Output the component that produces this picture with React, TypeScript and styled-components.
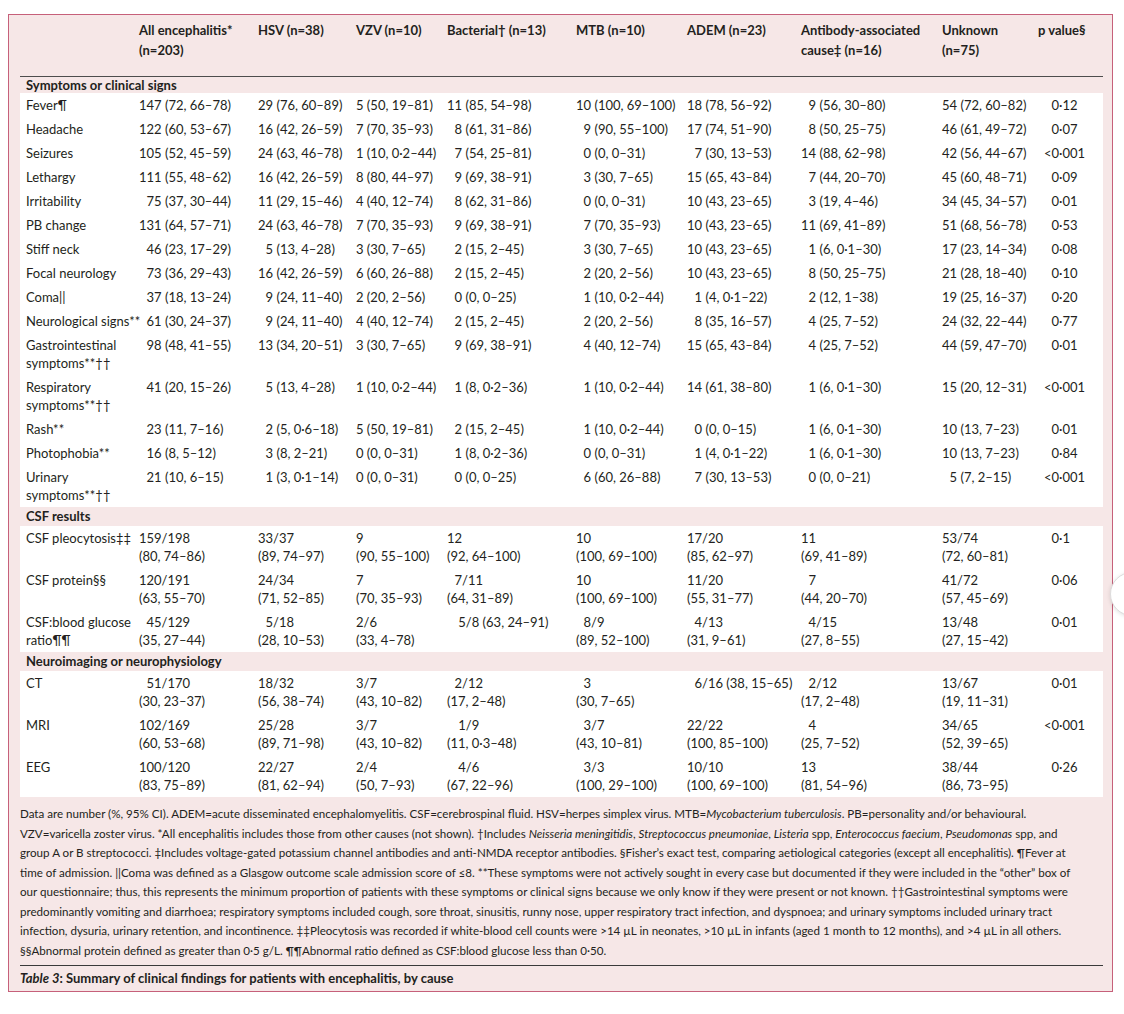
import React from "react"
import styled, { createGlobalStyle } from "styled-components"

const GlobalStyle = createGlobalStyle`
  html, body {
    margin: 0;
    padding: 0;
    background: #fff;
  }
  body {
    font-family: Lato, "Noto Sans", "Liberation Sans", sans-serif;
    color: #231f20;
  }
`

// column template shared by head and every body section
const COLS = "119px 119px 98px 91px 129px 111px 114px 141px 80px 81px"

// widest lead (digits before " (") per data column, symptoms section
const LEADS = [3, 2, 1, 2, 2, 2, 2, 2]

const Page = styled.div`
  width: 1105px;
  padding: 14px 11px 20px 8px;
`

const Panel = styled.section`
  background: #f6e7e7;
  border: 1.5px solid #c6607a;
  padding: 0 9px 0 11px;
`

const Grid = styled.div`
  display: grid;
  grid-template-columns: ${COLS};
`

const Head = styled(Grid)`
  padding: 6px 0 16px;
  border-bottom: 1.5px solid #4d4d4d;
  font-size: 13px;
  font-weight: 700;
  line-height: 19.5px;
`

const HeadCell = styled.div<{ $pad?: number }>`
  white-space: nowrap;
  padding-left: ${(p) => p.$pad ?? 0}px;
`

const SectionTitle = styled.div<{ $tight?: boolean }>`
  padding: ${(p) => (p.$tight ? "0 6px" : "0 6px 1px")};
  font-size: 13px;
  font-weight: 700;
  line-height: ${(p) => (p.$tight ? "16px" : "18px")};
`

const Body = styled(Grid)`
  background: #fff;
  font-size: 13px;
  line-height: 18px;
`

const Cell = styled.div<{ $pad?: number }>`
  white-space: nowrap;
  padding: 3px 0 3px ${(p) => p.$pad ?? 0}px;
`

const Lead = styled.span<{ $w: number }>`
  display: inline-block;
  min-width: ${(p) => p.$w}ch;
  text-align: right;
`

const Indent = styled.span<{ $w: number }>`
  display: inline-block;
  width: ${(p) => p.$w}ch;
`

const Line = styled.span`
  display: block;
`

const Notes = styled.div`
  padding: 7px 0 2px;
  font-size: 11.6px;
  line-height: 19.5px;
`

const NoteLine = styled.div`
  white-space: nowrap;
`

const Caption = styled.div`
  margin-top: 3px;
  padding: 3px 0 4px;
  border-top: 1px solid #3a3a3a;
  font-size: 13px;
  font-weight: 700;
  line-height: 18px;
`

const SideButton = styled.div`
  position: fixed;
  top: 572px;
  right: -30px;
  width: 42px;
  height: 42px;
  border-radius: 50%;
  background: #fff;
  border: 1px solid #dcdcdc;
  box-shadow: 0 1px 4px rgba(0, 0, 0, 0.12);
`

type Row = { label: string; cells: string[] }

const symptoms: Row[] = [
  { label: "Fever¶", cells: ["147 (72, 66–78)", "29 (76, 60–89)", "5 (50, 19–81)", "11 (85, 54–98)", "10 (100, 69–100)", "18 (78, 56–92)", "9 (56, 30–80)", "54 (72, 60–82)", "0·12"] },
  { label: "Headache", cells: ["122 (60, 53–67)", "16 (42, 26–59)", "7 (70, 35–93)", "8 (61, 31–86)", "9 (90, 55–100)", "17 (74, 51–90)", "8 (50, 25–75)", "46 (61, 49–72)", "0·07"] },
  { label: "Seizures", cells: ["105 (52, 45–59)", "24 (63, 46–78)", "1 (10, 0·2–44)", "7 (54, 25–81)", "0 (0, 0–31)", "7 (30, 13–53)", "14 (88, 62–98)", "42 (56, 44–67)", "<0·001"] },
  { label: "Lethargy", cells: ["111 (55, 48–62)", "16 (42, 26–59)", "8 (80, 44–97)", "9 (69, 38–91)", "3 (30, 7–65)", "15 (65, 43–84)", "7 (44, 20–70)", "45 (60, 48–71)", "0·09"] },
  { label: "Irritability", cells: ["75 (37, 30–44)", "11 (29, 15–46)", "4 (40, 12–74)", "8 (62, 31–86)", "0 (0, 0–31)", "10 (43, 23–65)", "3 (19, 4–46)", "34 (45, 34–57)", "0·01"] },
  { label: "PB change", cells: ["131 (64, 57–71)", "24 (63, 46–78)", "7 (70, 35–93)", "9 (69, 38–91)", "7 (70, 35–93)", "10 (43, 23–65)", "11 (69, 41–89)", "51 (68, 56–78)", "0·53"] },
  { label: "Stiff neck", cells: ["46 (23, 17–29)", "5 (13, 4–28)", "3 (30, 7–65)", "2 (15, 2–45)", "3 (30, 7–65)", "10 (43, 23–65)", "1 (6, 0·1–30)", "17 (23, 14–34)", "0·08"] },
  { label: "Focal neurology", cells: ["73 (36, 29–43)", "16 (42, 26–59)", "6 (60, 26–88)", "2 (15, 2–45)", "2 (20, 2–56)", "10 (43, 23–65)", "8 (50, 25–75)", "21 (28, 18–40)", "0·10"] },
  { label: "Coma||", cells: ["37 (18, 13–24)", "9 (24, 11–40)", "2 (20, 2–56)", "0 (0, 0–25)", "1 (10, 0·2–44)", "1 (4, 0·1–22)", "2 (12, 1–38)", "19 (25, 16–37)", "0·20"] },
  { label: "Neurological signs**", cells: ["61 (30, 24–37)", "9 (24, 11–40)", "4 (40, 12–74)", "2 (15, 2–45)", "2 (20, 2–56)", "8 (35, 16–57)", "4 (25, 7–52)", "24 (32, 22–44)", "0·77"] },
  { label: "Gastrointestinal\nsymptoms**††", cells: ["98 (48, 41–55)", "13 (34, 20–51)", "3 (30, 7–65)", "9 (69, 38–91)", "4 (40, 12–74)", "15 (65, 43–84)", "4 (25, 7–52)", "44 (59, 47–70)", "0·01"] },
  { label: "Respiratory\nsymptoms**††", cells: ["41 (20, 15–26)", "5 (13, 4–28)", "1 (10, 0·2–44)", "1 (8, 0·2–36)", "1 (10, 0·2–44)", "14 (61, 38–80)", "1 (6, 0·1–30)", "15 (20, 12–31)", "<0·001"] },
  { label: "Rash**", cells: ["23 (11, 7–16)", "2 (5, 0·6–18)", "5 (50, 19–81)", "2 (15, 2–45)", "1 (10, 0·2–44)", "0 (0, 0–15)", "1 (6, 0·1–30)", "10 (13, 7–23)", "0·01"] },
  { label: "Photophobia**", cells: ["16 (8, 5–12)", "3 (8, 2–21)", "0 (0, 0–31)", "1 (8, 0·2–36)", "0 (0, 0–31)", "1 (4, 0·1–22)", "1 (6, 0·1–30)", "10 (13, 7–23)", "0·84"] },
  { label: "Urinary\nsymptoms**††", cells: ["21 (10, 6–15)", "1 (3, 0·1–14)", "0 (0, 0–31)", "0 (0, 0–25)", "6 (60, 26–88)", "7 (30, 13–53)", "0 (0, 0–21)", "5 (7, 2–15)", "<0·001"] },
]

// "~" = one digit of indent, "^" = half a digit, "\n" = line break
const csf: Row[] = [
  { label: "CSF pleocytosis‡‡", cells: ["159/198\n(80, 74–86)", "33/37\n(89, 74–97)", "9\n(90, 55–100)", "12\n(92, 64–100)", "10\n(100, 69–100)", "17/20\n(85, 62–97)", "11\n(69, 41–89)", "53/74\n(72, 60–81)", "0·1"] },
  { label: "CSF protein§§", cells: ["120/191\n(63, 55–70)", "24/34\n(71, 52–85)", "7\n(70, 35–93)", "~7/11\n(64, 31–89)", "10\n(100, 69–100)", "11/20\n(55, 31–77)", "~7\n(44, 20–70)", "41/72\n(57, 45–69)", "0·06"] },
  { label: "CSF:blood glucose\nratio¶¶", cells: ["~45/129\n(35, 27–44)", "~5/18\n(28, 10–53)", "2/6\n(33, 4–78)", "~^5/8 (63, 24–91)", "~8/9\n(89, 52–100)", "~4/13\n(31, 9–61)", "~4/15\n(27, 8–55)", "13/48\n(27, 15–42)", "0·01"] },
]

const neuro: Row[] = [
  { label: "CT", cells: ["~51/170\n(30, 23–37)", "18/32\n(56, 38–74)", "3/7\n(43, 10–82)", "~2/12\n(17, 2–48)", "~3\n(30, 7–65)", "~6/16 (38, 15–65)", "~2/12\n(17, 2–48)", "13/67\n(19, 11–31)", "0·01"] },
  { label: "MRI", cells: ["102/169\n(60, 53–68)", "25/28\n(89, 71–98)", "3/7\n(43, 10–82)", "~^1/9\n(11, 0·3–48)", "~3/7\n(43, 10–81)", "22/22\n(100, 85–100)", "~4\n(25, 7–52)", "34/65\n(52, 39–65)", "<0·001"] },
  { label: "EEG", cells: ["100/120\n(83, 75–89)", "22/27\n(81, 62–94)", "2/4\n(50, 7–93)", "~^4/6\n(67, 22–96)", "~3/3\n(100, 29–100)", "10/10\n(100, 69–100)", "13\n(81, 54–96)", "38/44\n(86, 73–95)", "0·26"] },
]

const Multi = ({ text }: { text: string }) => (
  <>
    {text.split("\n").map((t, i) => (
      <Line key={i}>{t}</Line>
    ))}
  </>
)

const PValue = ({ v }: { v: string }) => {
  const [head, tail] = v.split("·")
  return (
    <Cell $pad={22}>
      <Lead $w={2}>{head}</Lead>·{tail}
    </Cell>
  )
}

const Aligned = ({ v, lead }: { v: string; lead: number }) => {
  const i = v.indexOf(" ")
  return (
    <Cell>
      <Lead $w={lead}>{v.slice(0, i)}</Lead>
      {v.slice(i)}
    </Cell>
  )
}

const Stacked = ({ v }: { v: string }) => {
  let indent = 0
  let s = v
  while (s[0] === "~" || s[0] === "^") {
    indent += s[0] === "~" ? 1 : 0.5
    s = s.slice(1)
  }
  const [first, ...rest] = s.split("\n")
  return (
    <Cell>
      <Line>
        {indent > 0 && <Indent $w={indent} />}
        {first}
      </Line>
      {rest.map((r, i) => (
        <Line key={i}>{r}</Line>
      ))}
    </Cell>
  )
}

const Section = ({ rows, stacked }: { rows: Row[]; stacked?: boolean }) => (
  <Body>
    {rows.map((row) => (
      <React.Fragment key={row.label}>
        <Cell $pad={6}>
          <Multi text={row.label} />
        </Cell>
        {row.cells.map((c, i) =>
          i === 8 ? (
            <PValue key={i} v={c} />
          ) : stacked ? (
            <Stacked key={i} v={c} />
          ) : (
            <Aligned key={i} v={c} lead={LEADS[i]} />
          )
        )}
      </React.Fragment>
    ))}
  </Body>
)

const headers = [
  "",
  "All encephalitis*\n(n=203)",
  "HSV (n=38)",
  "VZV (n=10)",
  "Bacterial† (n=13)",
  "MTB (n=10)",
  "ADEM (n=23)",
  "Antibody-associated\ncause‡ (n=16)",
  "Unknown\n(n=75)",
  "p value§",
]

export default function App() {
  return (
    <Page>
      <GlobalStyle />
      <Panel>
        <Head>
          {headers.map((h, i) => (
            <HeadCell key={i} $pad={i === 0 ? 6 : i === 9 ? 16 : 0}>
              <Multi text={h} />
            </HeadCell>
          ))}
        </Head>

        <SectionTitle $tight>Symptoms or clinical signs</SectionTitle>
        <Section rows={symptoms} />

        <SectionTitle>CSF results</SectionTitle>
        <Section rows={csf} stacked />

        <SectionTitle>Neuroimaging or neurophysiology</SectionTitle>
        <Section rows={neuro} stacked />

        <Notes>
          <NoteLine>
            Data are number (%, 95% CI). ADEM=acute disseminated encephalomyelitis. CSF=cerebrospinal fluid. HSV=herpes simplex virus. MTB=<i>Mycobacterium tuberculosis</i>. PB=personality and/or behavioural.
          </NoteLine>
          <NoteLine>
            VZV=varicella zoster virus. *All encephalitis includes those from other causes (not shown). †Includes <i>Neisseria meningitidis</i>, <i>Streptococcus pneumoniae</i>, <i>Listeria</i> spp, <i>Enterococcus faecium</i>, <i>Pseudomonas</i> spp, and
          </NoteLine>
          <NoteLine>
            group A or B streptococci. ‡Includes voltage-gated potassium channel antibodies and anti-NMDA receptor antibodies. §Fisher’s exact test, comparing aetiological categories (except all encephalitis). ¶Fever at
          </NoteLine>
          <NoteLine>
            time of admission. ||Coma was defined as a Glasgow outcome scale admission score of ≤8. **These symptoms were not actively sought in every case but documented if they were included in the “other” box of
          </NoteLine>
          <NoteLine>
            our questionnaire; thus, this represents the minimum proportion of patients with these symptoms or clinical signs because we only know if they were present or not known. ††Gastrointestinal symptoms were
          </NoteLine>
          <NoteLine>
            predominantly vomiting and diarrhoea; respiratory symptoms included cough, sore throat, sinusitis, runny nose, upper respiratory tract infection, and dyspnoea; and urinary symptoms included urinary tract
          </NoteLine>
          <NoteLine>
            infection, dysuria, urinary retention, and incontinence. ‡‡Pleocytosis was recorded if white-blood cell counts were &gt;14 µL in neonates, &gt;10 µL in infants (aged 1 month to 12 months), and &gt;4 µL in all others.
          </NoteLine>
          <NoteLine>
            §§Abnormal protein defined as greater than 0·5 g/L. ¶¶Abnormal ratio defined as CSF:blood glucose less than 0·50.
          </NoteLine>
        </Notes>

        <Caption>
          <i>Table 3</i>: Summary of clinical findings for patients with encephalitis, by cause
        </Caption>
      </Panel>
      <SideButton />
    </Page>
  )
}
